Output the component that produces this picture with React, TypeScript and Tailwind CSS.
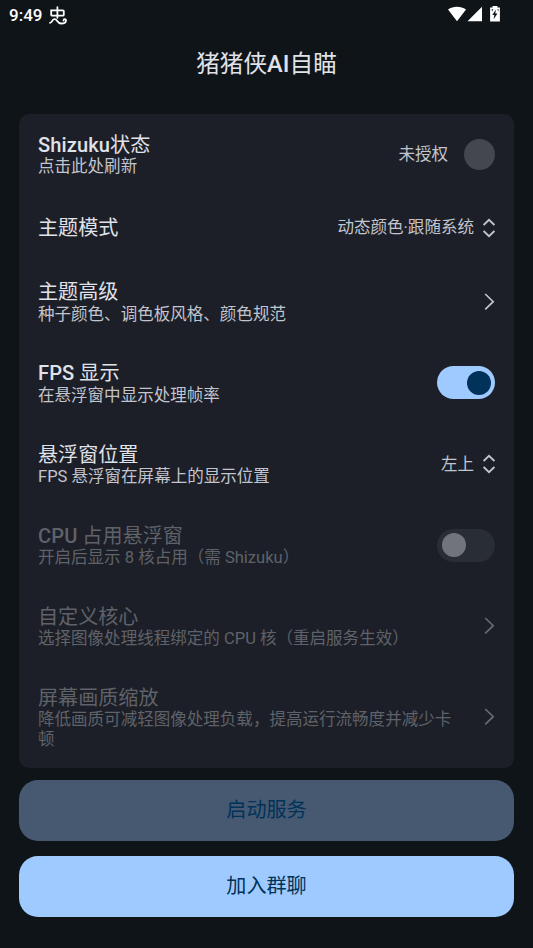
import { ReactNode, useState } from "react";

const ChevronRight = () => (
  <svg className="h-[18px] w-[11px]" viewBox="0 0 11 18" fill="none" stroke="currentColor" strokeWidth="1.7">
    <path d="M1.2 1 9.2 8.7 1.2 16.4" />
  </svg>
);

const UpDown = () => (
  <svg className="h-5 w-3" viewBox="0 0 12 20" fill="none" stroke="currentColor" strokeWidth="1.8">
    <path d="M.6 7 6 1.8 11.4 7M.6 13 6 18.2 11.4 13" />
  </svg>
);

const BugIcon = () => (
  <svg className="h-[19px] w-[18px]" viewBox="0 0 18 19" fill="none" stroke="white" strokeWidth="1.8" strokeLinecap="round">
    <path d="M8.4 1.2v10.6M2.2 4.3h11.6a1 1 0 0 1 1 1v3.4a1 1 0 0 1-1 1H3.2a1 1 0 0 1-1-1Z" />
    <path d="M1 16.8c2.2 0 2-3.6 4.6-3.6 2.8 0 2.4 4.3 6.4 4.3 3.2 0 5-1.4 5-3.1 0-1.6-2.5-1.6-2.5.2" />
  </svg>
);

// Latin letters are set in medium, Chinese characters stay regular
const Mixed = ({ text }: { text: string }) => (
  <>
    {text.split(/([A-Za-z]+)/).map((part, i) =>
      i % 2 ? (
        <span key={i} className="font-medium tracking-[0.1px]">
          {part}
        </span>
      ) : (
        part
      )
    )}
  </>
);

const Switch = ({ checked, onClick, disabled }: { checked: boolean; onClick?: () => void; disabled?: boolean }) => (
  <button
    role="switch"
    aria-checked={checked}
    disabled={disabled}
    onClick={onClick}
    className={`flex h-[33px] w-[58px] items-center rounded-full px-[4.5px] ${
      checked ? "justify-end bg-[#9fcaff]" : "justify-start bg-[#292d34]"
    }`}>
    <span className={`size-6 rounded-full ${checked ? "bg-[#00325a]" : "bg-[#71747b]"}`} />
  </button>
);

type RowProps = {
  title: string;
  summary?: string;
  height: string;
  disabled?: boolean;
  children: ReactNode;
};

const Row = ({ title, summary, height, disabled, children }: RowProps) => (
  <div className={`flex items-center px-[19px] ${height}`}>
    <div className={`min-w-0 grow pt-[2px] ${summary ? "basis-[300px]" : ""}`}>
      <p className={`text-[20.1px] leading-[23.4px] ${disabled ? "text-[#5f6269]" : "text-[#e0e2ea]"}`}>
        <Mixed text={title} />
      </p>
      {summary && (
        <p className={`text-[16.55px] leading-[19.5px] ${disabled ? "text-[#5f6269]" : "text-[#c2c5ce]"}`}>{summary}</p>
      )}
    </div>
    <div
      className={`ml-5 flex shrink-0 items-center text-[16.55px] leading-5 ${
        disabled ? "text-[#686b72]" : "text-[#c2c5ce]"
      }`}>
      {children}
    </div>
  </div>
);

const App = () => {
  const [showFps, setShowFps] = useState(true);

  return (
    <div className="h-[948px] w-[533px] bg-[#0f1418] font-['Roboto','Noto_Sans_CJK_SC',sans-serif]">
      <div className="flex h-[30px] items-center justify-between pr-[32px] pl-[9px] text-white">
        <div className="flex items-center gap-[7px]">
          <span className="text-[17px] leading-5 font-medium">9:49</span>
          <BugIcon />
        </div>
        <svg className="mt-[-2px] h-[18px] w-[53px]" viewBox="0 0 53 18" fill="white">
          <path d="M0 4.5C5.2.8 12.8.8 18 4.5L9 16.3ZM19.5 16.3 34 1.8v14.5Z" />
          <path d="M44.5 1h5v1.6h2.4v13.9h-9.8V2.6h2.4Z" />
          <path d="m47.9 4.6-3.6 5.4h2.1l-.8 4.2 3.9-5.6h-2.2ZM43.6 4.2h1.8l-1.4 2.2ZM49.2 4.2h1.3v2.2Z" fill="#0f1418" />
        </svg>
      </div>

      <h1 className="flex h-[68px] items-center justify-center pt-[2px] text-[23.6px] text-[#e0e2ea]">
        <span>
          <Mixed text="猪猪侠AI自瞄" />
        </span>
      </h1>

      <div className="px-[19px] pt-4">
        <div className="h-[654px] rounded-[10px] bg-[#1c1f27]">
          <Row title="Shizuku状态" summary="点击此处刷新" height="h-[80.6px]">
            <span className="pt-px">未授权</span>
            <span className="ml-4 size-[31px] rounded-full bg-[#44474e]" />
          </Row>
          <Row title="主题模式" height="h-[66.7px]">
            <span className="mr-[9px] pt-px">动态颜色·跟随系统</span>
            <UpDown />
          </Row>
          <Row title="主题高级" summary="种子颜色、调色板风格、颜色规范" height="h-[81.1px]">
            <ChevronRight />
          </Row>
          <Row title="FPS 显示" summary="在悬浮窗中显示处理帧率" height="h-[81.1px]">
            <Switch checked={showFps} onClick={() => setShowFps(!showFps)} />
          </Row>
          <Row title="悬浮窗位置" summary="FPS 悬浮窗在屏幕上的显示位置" height="h-[81.1px]">
            <span className="mr-[9px] pt-px">左上</span>
            <UpDown />
          </Row>
          <Row title="CPU 占用悬浮窗" summary="开启后显示 8 核占用（需 Shizuku）" height="h-[81.1px]" disabled>
            <Switch checked={false} disabled />
          </Row>
          <Row
            title="自定义核心"
            summary="选择图像处理线程绑定的 CPU 核（重启服务生效）"
            height="h-[81.1px]"
            disabled>
            <ChevronRight />
          </Row>
          <Row
            title="屏幕画质缩放"
            summary="降低画质可减轻图像处理负载，提高运行流畅度并减少卡顿"
            height="h-[100.8px]"
            disabled>
            <ChevronRight />
          </Row>
        </div>

        <button
          disabled
          className="mt-3 flex h-[61px] w-full items-center justify-center rounded-[19px] bg-[#475970] text-[20.1px] text-[#00325a]">
          启动服务
        </button>
        <button className="mt-[15px] flex h-[61px] w-full items-center justify-center rounded-[19px] bg-[#9fcaff] text-[20.1px] text-[#00325a]">
          加入群聊
        </button>
      </div>
    </div>
  );
};

export default App;
